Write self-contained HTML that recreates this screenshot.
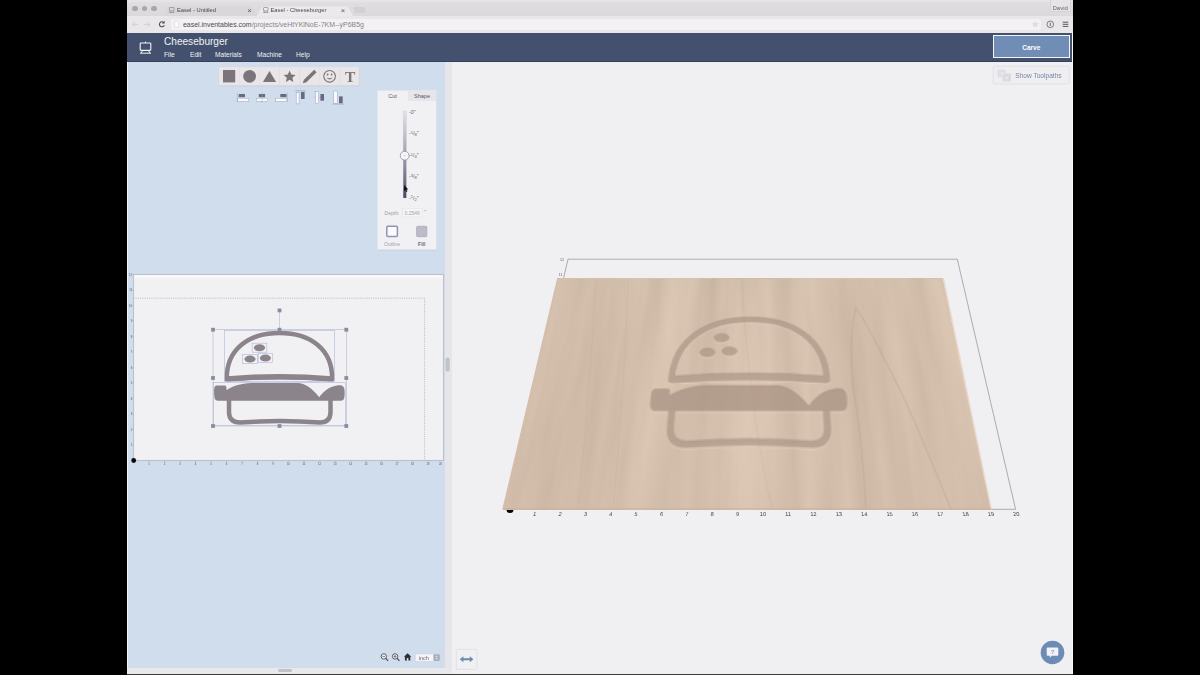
<!DOCTYPE html>
<html lang="en">
<head>
<meta charset="utf-8">
<title>Easel - Cheeseburger</title>
<style>
*{box-sizing:border-box;margin:0;padding:0}
html,body{width:1200px;height:675px;overflow:hidden;background:#000}
body{position:relative;font-family:"Liberation Sans",sans-serif;color:#333}
.abs{position:absolute}
#win{position:absolute;left:127px;top:0;width:946px;height:675px;background:#f0eff2;overflow:hidden}
/* browser chrome */
#tabbar{position:absolute;left:0;top:0;width:946px;height:16px;background:linear-gradient(#e8e6e9 0,#dfdde0 20%,#dbd9dc 100%)}
#toolbar{position:absolute;left:0;top:16px;width:946px;height:17px;background:#e9e7ea}
.tl{position:absolute;top:5.5px;width:5.5px;height:5.5px;border-radius:50%;background:#a9a7aa}
.tab{position:absolute;top:5px;height:11px;font-size:5.75px;color:#48474b;line-height:11px;white-space:nowrap}
.tab .bg{position:absolute;left:0;top:0;right:0;bottom:0;border-radius:3px 3px 0 0;transform:perspective(20px) rotateX(12deg);transform-origin:bottom}
#url{position:absolute;left:44px;top:2.6px;width:870px;height:11.8px;background:#f3f1f4;border-radius:2px;font-size:6.95px;line-height:11.8px;color:#858488;white-space:nowrap}
/* header */
#hdr{position:absolute;left:0;top:33px;width:946px;height:28.5px;background:#43516f;border-bottom:1px solid #34405c}
#title{position:absolute;left:37px;top:.9px;font-size:11.6px;line-height:14px;color:#f3f3f6;white-space:nowrap;transform-origin:0 50%;transform:scaleX(.87)}
.menu{position:absolute;top:17.5px;font-size:7.2px;line-height:8px;color:#f1f1f5;white-space:nowrap;transform-origin:0 50%;transform:scaleX(.92)}
#carve{position:absolute;left:866px;top:2.3px;width:76.6px;height:22.7px;border:1.6px solid #f4f5f8;background:#6f8db5;color:#fff;font-weight:bold;font-size:6.5px;line-height:24.4px;text-align:center}
/* left pane */
#left{position:absolute;left:0;top:61.5px;width:317.5px;height:606.5px;background:#d0dded}
#divider{position:absolute;left:317.5px;top:61.5px;width:7.5px;height:612px;background:#e7e5e9}
#hscroll{position:absolute;left:0;top:668px;width:325px;height:5.5px;background:#e9e8eb}
#hthumb{position:absolute;left:151px;top:1.2px;width:14px;height:3px;border-radius:1.5px;background:#c2c1c5}
#bottomline{position:absolute;left:0;top:673.5px;width:946px;height:1.5px;background:#3a393c}
</style>
</head>
<body>
<div id="win">
  <div id="tabbar">
    <div class="tl" style="left:5px"></div><div class="tl" style="left:14.7px"></div><div class="tl" style="left:24px"></div>
    <div class="tab" style="left:36px;width:94px"><div class="bg" style="background:#d9d7da"></div><span class="abs" style="left:14px">Easel - Untitled</span><span class="abs" style="left:84.2px;font-size:7.6px;color:#555">×</span></div>
    <div class="tab" style="left:130px;width:96px"><div class="bg" style="background:#ebe9ec"></div><span class="abs" style="left:13.5px">Easel - Cheeseburger</span><span class="abs" style="left:83.8px;font-size:7.6px;color:#555">×</span></div>
    <div class="abs" style="left:227px;top:7px;width:11px;height:6px;background:#d2d0d3;border-radius:1px;transform:skewX(15deg)"></div>
    <div class="abs" style="left:922.5px;top:-1px;width:21px;height:13px;background:#e6e4e7;border:.5px solid #d5d3d7;border-radius:1px"></div><div class="abs" style="left:925.5px;top:4.8px;font-size:6px;line-height:7px;color:#666">David</div>
  </div>
  <div id="toolbar">
    <div id="url"><span class="abs" style="left:12px;color:#4a4a4d">easel.inventables.com<span style="color:#858488">/projects/veHtYKlNoE-7KM--yP6B5g</span></span></div>
  </div>
  <div id="hdr">
    <div id="title">Cheeseburger</div>
    <div class="menu" style="left:37px">File</div>
    <div class="menu" style="left:62.5px">Edit</div>
    <div class="menu" style="left:88px">Materials</div>
    <div class="menu" style="left:129.5px">Machine</div>
    <div class="menu" style="left:168.5px">Help</div>
    <div id="carve">Carve</div>
  </div>
  <div id="left"></div>
  <div class="abs" style="left:0;top:62px;width:1.3px;height:606px;background:#f2f5fa"></div>
  <div id="divider"></div>
  <div id="hscroll"><div id="hthumb"></div></div>
  <div class="abs" style="left:944.8px;top:33px;width:1.2px;height:641px;background:#fafafb"></div>
  <div id="bottomline"></div>
</div>

<svg class="abs" style="left:0;top:0" width="1200" height="675" viewBox="0 0 1200 675">
<defs>
<g id="burger">
  <path d="M226.75 379.3 C226.2 349 249 333 279.5 333 C310 333 332.7 349 332.15 379.3 Q279.5 375 226.75 379.3 Z" fill="none" stroke-width="4.5" stroke-linejoin="round"/>
  <path d="M227 378.9 Q279.5 374.4 332 378.9" fill="none" stroke-width="5.2" stroke-linecap="butt"/>
  <ellipse cx="259.5" cy="347.7" rx="5.6" ry="3.5" stroke="none"/>
  <ellipse cx="250" cy="359.1" rx="5.6" ry="3.5" stroke="none"/>
  <ellipse cx="265.4" cy="358.1" rx="5.6" ry="3.5" stroke="none"/>
  <path id="patty" d="M214.1 391.3 C214.1 387.5 214.6 385.5 217.5 385.5 L224.6 385.5 C226.2 385.5 226.6 386.5 226.6 390.2 C232 386.5 240 383.3 252 383 L297.5 383 C305 383.3 312 388 319.3 397.3 C323 392 328 387 336.9 385.5 C342.5 384.8 344.6 386.5 344.6 391.3 C344.8 397.5 344.5 400.8 340.5 400.8 L218 400.8 C214.6 400.8 214.1 398 214.1 391.3 Z" stroke="none"/>
  <path d="M229 399 L229 412.5 Q229.3 422.3 240 422.6 Q279.5 419.3 320 422.6 Q330.3 422.3 330.5 412.5 L330.5 399" fill="none" stroke-width="4.5" stroke-linejoin="round"/>
</g>
</defs>


<!-- chrome icons -->
<g fill="none" stroke="#cfcdd1" stroke-width="1" stroke-linecap="round" stroke-linejoin="round">
<path d="M137.6 24.3h-5.2M134.4 22.2l-2.2 2.1l2.2 2.1"/>
<path d="M144.4 24.3h5.2M147.6 22.2l2.2 2.1l-2.2 2.1"/>
</g>
<path d="M163.8 22.6 a2.5 2.5 0 1 0 .5 2.6" fill="none" stroke="#4b4a4e" stroke-width="1.1"/>
<path d="M164.6 20.8 v2.7 h-2.7 Z" fill="#4b4a4e"/>
<path d="M174.6 20.8 h2.6 l1.5 1.5 v5 h-4.1 Z" fill="#fdfdfd" stroke="#c9c8cc" stroke-width=".5"/>
<path d="M1035.3 20.7 l1.1 2.3 l2.5 .3 l-1.8 1.7 l.5 2.5 l-2.3 -1.2 l-2.3 1.2 l.5 -2.5 l-1.8 -1.7 l2.5 -.3 Z" fill="#dddce0"/>
<circle cx="1050.3" cy="24.3" r="3.3" fill="none" stroke="#4f4e52" stroke-width=".7"/>
<path d="M1050.3 22.6v3.4" stroke="#4f4e52" stroke-width=".8"/>
<path d="M1062.7 22.2h5.6M1062.7 24.3h5.6M1062.7 26.4h5.6" stroke="#4a494d" stroke-width=".9"/>
<!-- favicons -->
<g fill="none" stroke="#8a898d" stroke-width=".7" transform="translate(0 .9)">
<rect x="169.4" y="6.6" width="4.6" height="3.4" rx=".5"/><path d="M169 11.6h5.4M170.2 10v1.6M173.2 10v1.6"/>
<rect x="263.5" y="6.6" width="4.6" height="3.4" rx=".5"/><path d="M263.1 11.6h5.4M264.3 10v1.6M267.3 10v1.6"/>
</g>
<!-- app logo -->
<g fill="none" stroke="#f2f3f7" stroke-width="1.1" stroke-linejoin="round">
<rect x="140.2" y="43" width="10.6" height="7.4" rx=".8"/>
<path d="M140 53.2h11M142.6 50.4l-1.6 2.8M148.4 50.4l1.6 2.8" stroke-width="1"/>
<path d="M145.5 41.6v1.4" stroke-width="1"/>
</g>
<!-- shape toolbar -->
<rect x="219.3" y="67.5" width="140.5" height="18.8" rx="1" fill="#b9c3d6" opacity=".6"/><rect x="218.7" y="66.7" width="140.5" height="18.8" rx="1" fill="#e9e6e8" stroke="#d6d5dc" stroke-width=".5"/>
<g stroke="#dcd9dd" stroke-width=".5"><path d="M239.3 67v18M259.4 67v18M279.5 67v18M299.6 67v18M319.7 67v18M339.8 67v18"/></g>
<g fill="#7b747a" stroke="none">
<rect x="223" y="70" width="12.2" height="12.4"/>
<circle cx="249.6" cy="76.3" r="6.4"/>
<path d="M269.5 71 L276.1 82 L262.9 82 Z"/>
<path d="M289.60 70.60 L291.33 74.51 L295.59 74.95 L292.41 77.81 L293.30 82.00 L289.60 79.85 L285.90 82.00 L286.79 77.81 L283.61 74.95 L287.87 74.51 Z"/>
<path d="M314.2 69.8 L316.6 72.2 L306.4 82.2 L302.8 83.2 L303.9 79.8 Z"/>
<circle cx="329.6" cy="76.3" r="5.8" fill="none" stroke="#7b747a" stroke-width="1.1"/>
<circle cx="327.6" cy="74.5" r=".9"/><circle cx="331.6" cy="74.5" r=".9"/>
<path d="M326.4 77.6 Q329.6 81.6 332.8 77.6 Q329.6 78.8 326.4 77.6 Z"/>
</g>
<text x="350.1" y="82" font-family="Liberation Serif,serif" font-size="15.5" fill="#7b747a" text-anchor="middle" font-weight="bold">T</text>
<!-- align icons -->
<g>
<rect x="238.7" y="94" width="6.3" height="3.2" fill="#676a80"/><rect x="237.6" y="98.2" width="11.2" height="3.2" fill="#fafafc" stroke="#9aa3bb" stroke-width=".5"/>
<path d="M237.3 93v9" stroke="#9aa3bb" stroke-width=".5"/>
<rect x="258.8" y="94" width="6.3" height="3.2" fill="#676a80"/><rect x="256.3" y="98.2" width="11.4" height="3.2" fill="#fafafc" stroke="#9aa3bb" stroke-width=".5"/>
<path d="M262 92.5v10.5" stroke="#9aa3bb" stroke-width=".4"/>
<rect x="280.3" y="94" width="6.2" height="3.2" fill="#676a80"/><rect x="275.5" y="98.2" width="11.4" height="3.2" fill="#fafafc" stroke="#9aa3bb" stroke-width=".5"/>
<path d="M287.3 93v9" stroke="#9aa3bb" stroke-width=".5"/>
<path d="M295.3 90.8h10.4" stroke="#8d96ae" stroke-width=".6"/>
<rect x="296.2" y="92.4" width="2.9" height="11.5" fill="#fafafc" stroke="#9aa3bb" stroke-width=".5"/><rect x="301" y="92" width="3.6" height="7" fill="#676a80"/>
<path d="M314 97.4h11" stroke="#9aa3bb" stroke-width=".4"/>
<rect x="315.5" y="91.6" width="3.1" height="12" fill="#fafafc" stroke="#9aa3bb" stroke-width=".5"/><rect x="320.4" y="94" width="3.6" height="6.7" fill="#676a80"/>
<rect x="333.8" y="91" width="3.4" height="12.3" fill="#fafafc" stroke="#9aa3bb" stroke-width=".5"/><rect x="339" y="96.4" width="3.7" height="6.9" fill="#676a80"/>
<path d="M332.7 104.1h11.4" stroke="#8d96ae" stroke-width=".6"/>
</g>
<!-- cut panel -->
<rect x="378.3" y="91.2" width="58.7" height="159.4" fill="#b9c5da" opacity=".55"/><rect x="377.6" y="90.3" width="58.7" height="159.4" fill="#f1f0f3" stroke="#dfe3ec" stroke-width=".6"/>
<rect x="408" y="90.6" width="28" height="10.4" fill="#e6e5e9"/>
<text x="392.5" y="98.2" font-size="5.6" fill="#5b5b63" text-anchor="middle">Cut</text>
<text x="422" y="98.4" font-size="5.6" fill="#5b5b63" text-anchor="middle">Shape</text>
<defs><linearGradient id="trk" x1="0" y1="0" x2="0" y2="1"><stop offset="0" stop-color="#e3e2e8"/><stop offset=".45" stop-color="#a9a9b6"/><stop offset=".8" stop-color="#6f7086"/><stop offset="1" stop-color="#44465f"/></linearGradient></defs>
<rect x="403.1" y="111" width="3.3" height="87" fill="url(#trk)" stroke="#c9c9d2" stroke-width=".3"/>
<circle cx="404.7" cy="155.7" r="4.4" fill="#f7f7f9" stroke="#8e8f9c" stroke-width=".8"/>
<path d="M403.2 155.7h3" stroke="#c5c5cc" stroke-width=".6"/>
<path d="M404 185 l0 6.2 l1.5 -1.3 l1 2.2 l.9 -.4 l-1 -2.1 l2 -.1 Z" fill="#111"/>
<g font-size="4.8" fill="#5f5f68">
<text x="409" y="113.8" font-size="5.3">-0"</text>
<text x="409" y="135.4" font-size="5.3">-<tspan font-size="4.1" dy="-1.6">1</tspan><tspan dy="1.6" font-size="5.3">/</tspan><tspan font-size="4.1" dy="1">8</tspan><tspan dy="-1" font-size="5.3">"</tspan></text>
<text x="409" y="157.4" font-size="5.3">-<tspan font-size="4.1" dy="-1.6">1</tspan><tspan dy="1.6" font-size="5.3">/</tspan><tspan font-size="4.1" dy="1">4</tspan><tspan dy="-1" font-size="5.3">"</tspan></text>
<text x="409" y="178.4" font-size="5.3">-<tspan font-size="4.1" dy="-1.6">3</tspan><tspan dy="1.6" font-size="5.3">/</tspan><tspan font-size="4.1" dy="1">8</tspan><tspan dy="-1" font-size="5.3">"</tspan></text>
<text x="409" y="199.6" font-size="5.3">-<tspan font-size="4.1" dy="-1.6">1</tspan><tspan dy="1.6" font-size="5.3">/</tspan><tspan font-size="4.1" dy="1">2</tspan><tspan dy="-1" font-size="5.3">"</tspan></text>
</g>
<text x="384.6" y="214.6" font-size="5" fill="#9c9ca6">Depth:</text>
<rect x="402.7" y="208.3" width="20" height="8.7" fill="#f5f4f7" stroke="#e0dfe5" stroke-width=".5"/>
<text x="404.6" y="214.6" font-size="5" fill="#a3a3ad">0.2549</text>
<text x="424.3" y="214.2" font-size="5" fill="#8d8d97">"</text>
<rect x="386.8" y="226.3" width="10.6" height="10.2" rx="1" fill="#fbfbfd" stroke="#8d94b8" stroke-width="1.5"/>
<rect x="416.6" y="226.3" width="10.2" height="10.4" rx="1" fill="#bdbcc6" stroke="#a7a9bf" stroke-width=".8"/>
<text x="392" y="245.6" font-size="5" fill="#a2a2ac" text-anchor="middle">Outline</text>
<text x="421.7" y="245.6" font-size="5" fill="#666672" text-anchor="middle" font-weight="bold">Fill</text>

<!-- right pane -->
<rect x="993.3" y="66.3" width="76" height="17.6" rx="1" fill="#efeef1" stroke="#dedde2" stroke-width=".8"/>
<g opacity=".85"><rect x="997.5" y="69.6" width="8.4" height="7.6" rx="1" fill="#dedde2"/><rect x="1002.4" y="73.6" width="8.6" height="7.8" rx="1" fill="#d9d8de"/><circle cx="1002.6" cy="73.6" r="1.2" fill="#efeef2"/><circle cx="1006.8" cy="77.8" r="1" fill="#efeef2"/></g>
<text x="1015.2" y="77.7" font-size="6.6" fill="#7b86a6">Show Toolpaths</text>
<defs>
<linearGradient id="wood" x1="0" y1="0" x2="1" y2="0">
<stop offset="0" stop-color="#d5beac"/><stop offset=".08" stop-color="#d3bca9"/><stop offset=".14" stop-color="#d7c0ae"/>
<stop offset=".22" stop-color="#d5beac"/><stop offset=".30" stop-color="#d8c2b1"/><stop offset=".38" stop-color="#d5bfad"/>
<stop offset=".47" stop-color="#d1baa7"/><stop offset=".53" stop-color="#d0b8a5"/><stop offset=".60" stop-color="#d4bdab"/>
<stop offset=".68" stop-color="#d7c2b0"/><stop offset=".76" stop-color="#d5bfad"/><stop offset=".84" stop-color="#d2bba9"/>
<stop offset=".92" stop-color="#d5bfad"/><stop offset="1" stop-color="#d3bcaa"/>
</linearGradient>
<clipPath id="woodclip"><polygon points="558,278 942.7,278 990.7,509.3 503,509.3"/></clipPath>
</defs>
<!-- frame -->
<path d="M509.5 509.3 L568 259.2 L957.3 259.2 L1015.6 509.3 Z" fill="none" stroke="#88878d" stroke-width=".65"/>
<circle cx="510" cy="509.6" r="3.5" fill="#050505"/>
<polygon points="558,278 942.7,278 990.7,509.3 503,509.3" fill="url(#wood)"/>

<path d="M503 508.9 H990.7" stroke="#c3a995" stroke-width=".9"/>
<g font-size="5.6" fill="#3d3d43"><text transform="translate(534.4 516.4) skewX(-11.9)" text-anchor="middle">1</text><text transform="translate(559.8 516.4) skewX(-10.6)" text-anchor="middle">2</text><text transform="translate(585.2 516.4) skewX(-9.3)" text-anchor="middle">3</text><text transform="translate(610.5 516.4) skewX(-8.0)" text-anchor="middle">4</text><text transform="translate(635.9 516.4) skewX(-6.7)" text-anchor="middle">5</text><text transform="translate(661.3 516.4) skewX(-5.3)" text-anchor="middle">6</text><text transform="translate(686.7 516.4) skewX(-4.0)" text-anchor="middle">7</text><text transform="translate(712.1 516.4) skewX(-2.7)" text-anchor="middle">8</text><text transform="translate(737.5 516.4) skewX(-1.3)" text-anchor="middle">9</text><text transform="translate(762.9 516.4) skewX(0.0)" text-anchor="middle">10</text><text transform="translate(788.2 516.4) skewX(1.4)" text-anchor="middle">11</text><text transform="translate(813.6 516.4) skewX(2.7)" text-anchor="middle">12</text><text transform="translate(839.0 516.4) skewX(4.0)" text-anchor="middle">13</text><text transform="translate(864.4 516.4) skewX(5.4)" text-anchor="middle">14</text><text transform="translate(889.8 516.4) skewX(6.7)" text-anchor="middle">15</text><text transform="translate(915.2 516.4) skewX(8.0)" text-anchor="middle">16</text><text transform="translate(940.5 516.4) skewX(9.4)" text-anchor="middle">17</text><text transform="translate(965.9 516.4) skewX(10.7)" text-anchor="middle">18</text><text transform="translate(991.3 516.4) skewX(12.0)" text-anchor="middle">19</text><text transform="translate(1016.7 516.4) skewX(13.2)" text-anchor="middle">20</text></g>
<text x="564" y="261" font-size="3.6" fill="#66666c" text-anchor="end">12</text>
<text x="562.4" y="276.4" font-size="3.6" fill="#66666c" text-anchor="end">11</text>
<!-- chat -->
<circle cx="1052.5" cy="652.5" r="11.8" fill="#6e8bb5"/>
<path d="M1047.6 647.6 h9.8 a.9 .9 0 0 1 .9 .9 v6.3 a.9 .9 0 0 1 -.9 .9 h-5.6 l-2 2 v-2 h-2.2 a.9 .9 0 0 1 -.9 -.9 v-6.3 a.9 .9 0 0 1 .9 -.9 Z" fill="#f1f3f8"/>
<text x="1052.5" y="654.2" font-size="6" fill="#8c9cc0" text-anchor="middle" font-weight="bold">?</text>
<!-- swap button -->
<rect x="456.3" y="649.4" width="20.6" height="20" rx="1" fill="#f0eff2" stroke="#dddce2" stroke-width=".8"/>
<path d="M459.8 659.2 l3.6 -3 v2 h6.4 v-2 l3.6 3 l-3.6 3 v-2 h-6.4 v2 Z" fill="#6a8ab3"/>
<!-- zoom controls -->
<g fill="none" stroke="#4b4a50" stroke-width=".9">
<circle cx="383.8" cy="656.4" r="2.7" fill="#f3f3f6"/><path d="M385.8 658.4 l2.3 2.4" stroke-width="1.2"/><path d="M382.4 656.4 h2.8" stroke-width=".7"/>
<circle cx="395.1" cy="656.4" r="2.7" fill="#f3f3f6"/><path d="M397.1 658.4 l2.3 2.4" stroke-width="1.2"/><path d="M393.7 656.4 h2.8 M395.1 655 v2.8" stroke-width=".7"/>
</g>
<path d="M407.6 653.3 l3.7 3.4 h-1 v3.7 h-1.9 v-2.4 h-1.6 v2.4 h-1.9 v-3.7 h-1 Z" fill="#2f2e33"/>
<rect x="415.4" y="654" width="24.6" height="7.3" rx="1" fill="#f6f6f8" stroke="#c9cbd3" stroke-width=".4"/>
<rect x="433.4" y="654.2" width="6.4" height="6.9" rx="1" fill="#a9acb8"/>
<path d="M436.6 655.6 l1.2 1.5 h-2.4 Z M436.6 659.8 l1.2 -1.5 h-2.4 Z" fill="#eceef2"/>
<text x="423.8" y="659.5" font-size="5.6" fill="#66666e" text-anchor="middle">inch</text>
<rect x="445.5" y="357.5" width="4.2" height="14.3" rx="2.1" fill="#c3c2c7"/>
<!-- 2D canvas -->
<rect x="133.5" y="274.5" width="310" height="186" fill="#f1f0f3" stroke="#bcc1ce" stroke-width="1.1"/>
<rect x="134.5" y="275.5" width="308" height="2" fill="#fbfbfc"/>
<path d="M133.5 298.2 H424.6 V460.5" fill="none" stroke="#a9a9b0" stroke-width=".7" stroke-dasharray="1.1 1.1"/>
<use href="#burger" fill="#8b848a" stroke="#8b848a"/>
<!-- selection -->
<g fill="none" stroke="#aab3d6" stroke-width=".55">
<rect x="213" y="329.7" width="133.3" height="96.3"/>
<rect x="224.5" y="330.3" width="110" height="51"/>
<rect x="213.6" y="382.5" width="132" height="43"/>
<rect x="252.2" y="343.2" width="14.6" height="9"/>
<rect x="242.7" y="354.6" width="14.6" height="9"/>
<rect x="258.1" y="353.6" width="14.6" height="9"/>
<path d="M279.5 329.7 V310.4"/>
</g>
<g fill="#8b8c9b">
<rect x="211.1" y="327.8" width="3.8" height="3.8"/><rect x="277.6" y="327.8" width="3.8" height="3.8"/><rect x="344.4" y="327.8" width="3.8" height="3.8"/>
<rect x="211.1" y="376.1" width="3.8" height="3.8"/><rect x="344.4" y="376.1" width="3.8" height="3.8"/>
<rect x="211.1" y="424.1" width="3.8" height="3.8"/><rect x="277.6" y="424.1" width="3.8" height="3.8"/><rect x="344.4" y="424.1" width="3.8" height="3.8"/>
<rect x="277.6" y="308.5" width="3.8" height="3.8"/>
</g>
<g font-size="2.8" fill="#4e5870"><text x="149.0" y="464.6" text-anchor="middle">1</text><text x="164.5" y="464.6" text-anchor="middle">2</text><text x="180.0" y="464.6" text-anchor="middle">3</text><text x="195.5" y="464.6" text-anchor="middle">4</text><text x="211.0" y="464.6" text-anchor="middle">5</text><text x="226.5" y="464.6" text-anchor="middle">6</text><text x="242.0" y="464.6" text-anchor="middle">7</text><text x="257.5" y="464.6" text-anchor="middle">8</text><text x="273.0" y="464.6" text-anchor="middle">9</text><text x="288.5" y="464.6" text-anchor="middle">10</text><text x="304.0" y="464.6" text-anchor="middle">11</text><text x="319.5" y="464.6" text-anchor="middle">12</text><text x="335.0" y="464.6" text-anchor="middle">13</text><text x="350.5" y="464.6" text-anchor="middle">14</text><text x="366.0" y="464.6" text-anchor="middle">15</text><text x="381.5" y="464.6" text-anchor="middle">16</text><text x="397.0" y="464.6" text-anchor="middle">17</text><text x="412.5" y="464.6" text-anchor="middle">18</text><text x="428.0" y="464.6" text-anchor="middle">19</text><text x="442.2" y="464.6" text-anchor="end">20</text><text x="132.2" y="446.2" text-anchor="end">1</text><text x="132.2" y="430.7" text-anchor="end">2</text><text x="132.2" y="415.2" text-anchor="end">3</text><text x="132.2" y="399.7" text-anchor="end">4</text><text x="132.2" y="384.2" text-anchor="end">5</text><text x="132.2" y="368.7" text-anchor="end">6</text><text x="132.2" y="353.2" text-anchor="end">7</text><text x="132.2" y="337.7" text-anchor="end">8</text><text x="132.2" y="322.2" text-anchor="end">9</text><text x="132.2" y="306.7" text-anchor="end">10</text><text x="132.2" y="291.2" text-anchor="end">11</text><text x="132.2" y="275.7" text-anchor="end">12</text></g><path d="M149.0 460.5v1.3M164.5 460.5v1.3M180.0 460.5v1.3M195.5 460.5v1.3M211.0 460.5v1.3M226.5 460.5v1.3M242.0 460.5v1.3M257.5 460.5v1.3M273.0 460.5v1.3M288.5 460.5v1.3M304.0 460.5v1.3M319.5 460.5v1.3M335.0 460.5v1.3M350.5 460.5v1.3M366.0 460.5v1.3M381.5 460.5v1.3M397.0 460.5v1.3M412.5 460.5v1.3M428.0 460.5v1.3M133.5 445.0h-1.2M133.5 429.5h-1.2M133.5 414.0h-1.2M133.5 398.5h-1.2M133.5 383.0h-1.2M133.5 367.5h-1.2M133.5 352.0h-1.2M133.5 336.5h-1.2M133.5 321.0h-1.2M133.5 305.5h-1.2M133.5 290.0h-1.2M133.5 274.5h-1.2" stroke="#8b97b3" stroke-width=".4"/>
<circle cx="133.7" cy="460.5" r="2.4" fill="#0a0a0a"/>
</svg>

<div class="abs" style="left:0;top:0;width:1200px;height:675px;transform-origin:0 0;transform:matrix3d(0.95107363,0.00000000,0,0.0000000000, -0.71573532,0.54380684,0,-0.0009375352, 0,0,1,0, 488.465097,38.823853,0,1);pointer-events:none">
<svg class="abs" style="left:0;top:0" width="1200" height="675" viewBox="0 0 1200 675">
<defs>
<filter id="woodf" x="0" y="0" width="1" height="1" color-interpolation-filters="sRGB">
<feTurbulence type="fractalNoise" baseFrequency="0.045 0.004" numOctaves="4" seed="3" result="n"/>
<feColorMatrix type="matrix" values="0.11 0 0 0 0.772  0.11 0 0 0 0.690  0.11 0 0 0 0.620  0 0 0 0 1"/>
</filter>
</defs>
<rect x="134" y="298.6" width="290.4" height="161.5" filter="url(#woodf)"/>
<use href="#burger" fill="#f3e0d0" stroke="#f3e0d0" opacity=".4" transform="translate(0 .8)"/>
<use href="#burger" fill="#7d6654" stroke="#7d6654" opacity=".2" transform="translate(0 -.6)"/>
<use href="#burger" fill="#9d8777" stroke="#9d8777" opacity=".42"/><use href="#patty" fill="#8f7a6b" opacity=".10"/>

</svg>
</div>
<svg class="abs" style="left:0;top:0;pointer-events:none" width="1200" height="675" viewBox="0 0 1200 675">
<g fill="none" stroke="#b39a87" stroke-width="1.9" opacity=".24">
<path d="M866 509 C864 470 860 430 853 385 C850 350 851 325 856 308 C866 322 880 350 903 396 C918 428 934 468 951 509"/>
<path d="M596 279 C592 350 586 430 578 509" stroke-width="1" opacity=".6"/>
<path d="M628 279 C626 350 620 430 613 509" stroke-width="1" opacity=".6"/>
<path d="M742 279 C744 330 752 420 772 509" stroke-width="1.4" opacity=".5"/>
</g>
<path d="M943.3 278 L991.3 509.3" stroke="#e9d8cb" stroke-width="1.4" fill="none"/>
<path d="M557.9 278 L502.9 509.3" stroke="#d6bdab" stroke-width="1.3" fill="none"/>
<path d="M503 508.9 H990.7" stroke="#c6ad99" stroke-width=".9"/>
</svg>
</body>
</html>
